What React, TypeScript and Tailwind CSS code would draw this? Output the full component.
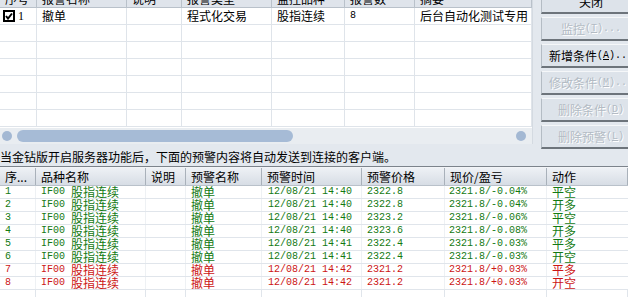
import React from 'react'

const cjk = "font-['Noto_Sans_CJK_SC','Noto_Sans',sans-serif]"
const mono = "font-['Liberation_Mono',monospace]"

const topCols = [
  { title: '序号', w: 'w-[37px]' },
  { title: '报警名称', w: 'w-[90px]' },
  { title: '说明', w: 'w-[55px]' },
  { title: '报警类型', w: 'w-[90px]' },
  { title: '监控品种', w: 'w-[73px]' },
  { title: '报警数', w: 'w-[70px]' },
  { title: '摘要', w: 'w-[117px]' },
]

const bottomCols = [
  { title: '序...', w: 'w-[36px]' },
  { title: '品种名称', w: 'w-[110px]' },
  { title: '说明', w: 'w-[40px]' },
  { title: '预警名称', w: 'w-[76px]' },
  { title: '预警时间', w: 'w-[100px]' },
  { title: '预警价格', w: 'w-[83px]' },
  { title: '现价/盈亏', w: 'w-[102px]' },
  { title: '动作', w: 'w-[81px]' },
]

const alerts = [
  { id: 1, time: '14:40', price: '2322.8', pl: '-0.04%', action: '平空', up: false },
  { id: 2, time: '14:40', price: '2322.8', pl: '-0.04%', action: '开多', up: false },
  { id: 3, time: '14:40', price: '2323.2', pl: '-0.06%', action: '平空', up: false },
  { id: 4, time: '14:40', price: '2323.6', pl: '-0.08%', action: '开多', up: false },
  { id: 5, time: '14:41', price: '2322.4', pl: '-0.03%', action: '平多', up: false },
  { id: 6, time: '14:41', price: '2322.4', pl: '-0.03%', action: '开空', up: false },
  { id: 7, time: '14:42', price: '2321.2', pl: '+0.03%', action: '平多', up: true },
  { id: 8, time: '14:42', price: '2321.2', pl: '+0.03%', action: '开空', up: true },
]

function Checkbox() {
  return (
    <span className="ml-[3px] w-[12px] h-[12px] border-2 border-black bg-white flex items-center justify-center">
      <svg width="8" height="8" viewBox="0 0 8 8">
        <path d="M1 4 L3 6.5 L7 1.5" stroke="black" strokeWidth="2" fill="none" />
      </svg>
    </span>
  )
}

function Btn({ label, hot, tail, disabled, first }: { label: string; hot?: string; tail?: string; disabled?: boolean; first?: boolean }) {
  return (
    <div
      className={`${first ? '-mt-[10px]' : 'mt-[3px]'} w-[100px] h-[24px] shrink-0 flex items-center justify-center bg-[#dde3ea] border border-[#b4bcc4] border-t-[#f5f7f9] border-b-2 border-b-[#6d747b] text-[12px] leading-none ${cjk} ${
        disabled ? 'text-[#b3bbc4] [text-shadow:1px_1px_0_#ffffff]' : 'text-black'
      }`}
    >
      <span>{label}</span>
      {hot && (
        <span className={`${mono} text-[10px] whitespace-pre`}>
          {'('}
          <span className="underline">{hot}</span>){tail}
        </span>
      )}
    </div>
  )
}

const cell = 'shrink-0 h-full flex items-center whitespace-pre border-r border-[#eef1f4]'
const num = `${mono} text-[10px] leading-none`
const zh = 'text-[12px] leading-none'

export default function App() {
  return (
    <div className={`w-[628px] h-[297px] overflow-hidden bg-[#e3e8ee] flex flex-col text-black ${cjk}`}>
      <div className="flex h-[148px] shrink-0">
        <div className="w-[533px] shrink-0 flex flex-col overflow-hidden">
          <div className="h-[128px] bg-white overflow-hidden border-r border-[#d4dae1] flex flex-col">
            <div className="-mt-[10px] h-[18px] shrink-0 flex bg-[#dfe4eb] border-b border-[#b9c1ca]">
              {topCols.map((c) => (
                <div key={c.title} className={`${c.w} shrink-0 border-r border-[#b9c1ca] pl-[5px] text-[12px] leading-[17px]`}>
                  {c.title}
                </div>
              ))}
            </div>
            {Array.from({ length: 7 }).map((_, i) => (
              <div key={i} className="h-[17px] shrink-0 flex border-b border-[#dfe4ea]">
                {topCols.map((c, j) => (
                  <div key={j} className={`${c.w} shrink-0 border-r border-[#dfe4ea] flex items-center text-[12px] leading-none`}>
                    {i === 0 && j === 0 && (
                      <>
                        <Checkbox />
                        <span className="ml-[3px] font-['Liberation_Serif',serif] text-[12px]">1</span>
                      </>
                    )}
                    {i === 0 && j === 1 && <span className="pl-[5px]">撤单</span>}
                    {i === 0 && j === 3 && <span className="pl-[5px]">程式化交易</span>}
                    {i === 0 && j === 4 && <span className="pl-[5px]">股指连续</span>}
                    {i === 0 && j === 5 && <span className={`pl-[5px] ${mono} text-[10px]`}>8</span>}
                    {i === 0 && j === 6 && <span className="pl-[5px]">后台自动化测试专用</span>}
                  </div>
                ))}
              </div>
            ))}
          </div>
          <div className="h-[16px] shrink-0 bg-[#e9edf1] border-r border-[#d4dae1] flex items-center">
            <span className="ml-[2px] w-[10px] h-[10px] rounded-full bg-[#a3b8d3]" />
            <span className="ml-[5px] w-[276px] h-[12px] rounded-full bg-[#a6bbd6]" />
            <span className="ml-auto mr-[6px] w-[10px] h-[10px] rounded-full bg-[#a3b8d3]" />
          </div>
        </div>
        <div className="ml-[8px] flex flex-col">
          <Btn first label="关闭" />
          <Btn label="监控" hot="T" tail="..." disabled />
          <Btn label="新增条件" hot="A" tail="..." />
          <Btn label="修改条件" hot="M" tail="..." disabled />
          <Btn label="删除条件" hot="D" disabled />
          <Btn label="删除预警" hot="L" disabled />
        </div>
      </div>

      <div className="h-[18px] shrink-0 text-[12px] leading-[18px] whitespace-nowrap">
        当金钻版开启服务器功能后，下面的预警内容将自动发送到连接的客户端。
      </div>
      <div className="h-[1px] shrink-0 bg-[#7c838b]" />
      <div className="h-[1px] shrink-0 bg-[#f2f4f7]" />

      <div className="flex-1 bg-white overflow-hidden flex flex-col">
        <div className="h-[18px] shrink-0 flex bg-gradient-to-b from-[#eef1f5] to-[#d7dde5] border-b border-[#b9c1ca]">
          {bottomCols.map((c) => (
            <div key={c.title} className={`${c.w} shrink-0 border-r border-[#a9b1ba] pl-[5px] text-[12px] leading-[17px] whitespace-nowrap`}>
              {c.title}
            </div>
          ))}
        </div>
        {alerts.map((a) => {
          const color = a.up ? 'text-[#cc1515]' : 'text-[#137a13]'
          return (
            <div key={a.id} className={`h-[13px] shrink-0 flex border-b border-[#e0e5eb] ${color}`}>
              <div className={`w-[36px] ${cell} pl-[5px]`}>
                <span className={num}>{a.id}</span>
              </div>
              <div className={`w-[110px] ${cell} pl-[5px]`}>
                <span className={num}>IF00 </span>
                <span className={zh}>股指连续</span>
              </div>
              <div className={`w-[40px] ${cell}`} />
              <div className={`w-[76px] ${cell} pl-[5px]`}>
                <span className={zh}>撤单</span>
              </div>
              <div className={`w-[100px] ${cell} pl-[6px]`}>
                <span className={num}>12/08/21 {a.time}</span>
              </div>
              <div className={`w-[83px] ${cell} pl-[5px]`}>
                <span className={num}>{a.price}</span>
              </div>
              <div className={`w-[102px] ${cell} pl-[4px]`}>
                <span className={num}>2321.8/{a.pl}</span>
              </div>
              <div className={`w-[81px] ${cell} border-r-0 pl-[5px]`}>
                <span className={zh}>{a.action}</span>
              </div>
            </div>
          )
        })}
        <div className="flex-1 flex">
          {bottomCols.map((c) => (
            <div key={c.title} className={`${c.w} shrink-0 border-r border-[#e0e5eb]`} />
          ))}
        </div>
      </div>
    </div>
  )
}
